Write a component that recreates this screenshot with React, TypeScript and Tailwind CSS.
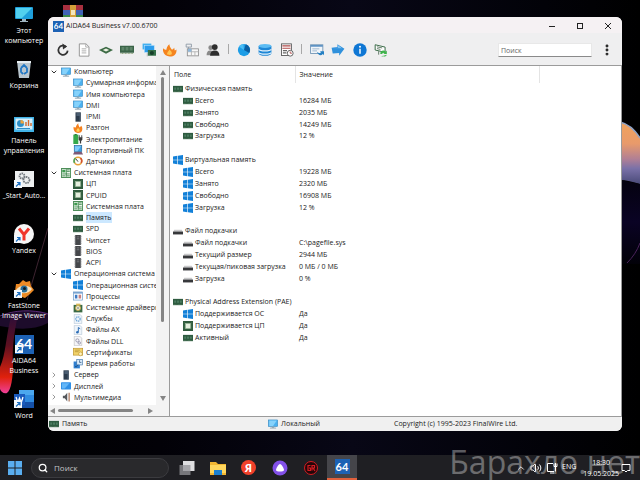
// src/App.tsx
import React, { useState } from 'react';
import { ChevronDown, ChevronRight, ChevronUp, MoreVertical, Search, Volume2 } from 'lucide-react';

interface TreeItem {
  label: string;
  icon: string;
  open?: boolean;
  closed?: boolean;
}

interface Row {
  label: string;
  icon: string;
  value?: string;
}

// Dibujos de 16x16 compartidos por el árbol, la tabla y la barra de estado
const glyphs: Record<string, React.ReactNode> = {
  monitor: (
    <>
      <rect x="0.5" y="1.5" width="15" height="10.500" fill="#4bb1f0" stroke="#2f7fb5" strokeWidth="0.8" />
      <path d="M2 2.500h12L8 11H2z" fill="#86d2fb" />
      <path d="M6 12h4v2H6z" fill="#8aa4b5" />
      <path d="M3 14h10v1H3z" fill="#6e8797" />
    </>
  ),
  server: (
    <>
      <rect x="4" y="0.5" width="8.5" height="15" fill="#2c3b4c" />
      <path d="M5.500 3h5.500M5.500 5h5.500" stroke="#7b93ab" />
      <path d="M11 1v14" stroke="#53657a" />
    </>
  ),
  flame: (
    <>
      <path d="M1 6c1.500 1.500 2.500 1.500 3.500 0.700C5 5 6 2.500 8.500 0.500c-.2 3 1 4 1.800 6.500C11.500 6.500 12.500 6 13 4.500c2 2 2.500 5 1.500 7.500-1 3-3.500 4-6.500 4-4.500 0-8-4.500-7-10z" fill="#f58220" />
      <path d="M8 8c2 2 3 3 2.500 5-.4 1.500-4.600 1.500-5 0C5 11 7 10 8 8z" fill="#ffd35a" />
    </>
  ),
  power: (
    <>
      <rect x="0.5" y="1" width="8" height="15" fill="#35a84a" />
      <rect x="2.500" y="0" width="3.500" height="2" fill="#2b7d39" />
      <path d="M10 2v4M14 2v4" stroke="#333" strokeWidth="1.400" />
      <path d="M9 5h6v4l-2 2v4h-2v-4L9 9z" fill="#3b3b3b" />
    </>
  ),
  laptop: (
    <>
      <rect x="2" y="1" width="12" height="9.500" fill="#3aa0e8" stroke="#22608f" />
      <path d="M3 2h10L7 10H3z" fill="#7fcbfa" />
      <path d="M2 11h12l2 4H0z" fill="#7c5a78" />
    </>
  ),
  gauge: (
    <>
      <circle cx="8" cy="8" r="6" fill="#fff" stroke="#e7a23a" strokeWidth="2.500" />
      <path d="M2.500 11A6 6 0 0 1 4 3.500" fill="none" stroke="#4aa65a" strokeWidth="2.500" />
      <path d="M12 3.500A6 6 0 0 1 13 11" fill="none" stroke="#d2502f" strokeWidth="2.500" />
      <path d="M8 9L5 5" stroke="#333" strokeWidth="1.500" />
    </>
  ),
  board: (
    <>
      <rect x="0.500" y="1" width="15" height="14" fill="#e9f5ea" stroke="#2f7a3d" strokeWidth="1.500" />
      <rect x="2" y="3" width="5" height="4" fill="#3e9a4f" />
      <path d="M9 3h5M9 5.500h5M2 9.500h12M2 12.500h5M9 12.500h5M8.500 2v12" stroke="#2f7a3d" strokeWidth="1.200" />
    </>
  ),
  cpu: (
    <>
      <rect x="0" y="0" width="16" height="16" fill="#2f5a3c" />
      <rect x="4" y="4" width="8" height="8" fill="#e6efdf" stroke="#9dbb9a" />
      <path d="M2 2v12M14 2v12" stroke="#5f8b69" strokeDasharray="1 1" />
    </>
  ),
  ram: (
    <>
      <rect x="0" y="3" width="16" height="10" fill="#2e5b40" />
      <path d="M2 5.500h3v3.500H2zM6.500 5.500h3v3.500h-3zM11 5.500h3v3.500h-3z" fill="#4c7d60" />
      <path d="M0 12.500h16" stroke="#8fae8f" strokeDasharray="1 1" />
    </>
  ),
  chip: (
    <>
      <rect x="3.500" y="0" width="9" height="16" fill="#45474b" />
      <path d="M2 2h2.500M2 5h2.500M2 8h2.500M2 11h2.500M2 14h2.500M11.500 2H14M11.500 5H14M11.500 8H14M11.500 11H14M11.500 14H14" stroke="#77797d" />
      <path d="M6 3h4M6 6h4" stroke="#909296" />
    </>
  ),
  windows: <path d="M0 2.300l7-1v6.200H0zM8 1.200L16 0v7.500H8zM0 8.500h7v6.200l-7-1zM8 8.500h8V16l-8-1.200z" fill="#1280d8" />,
  process: (
    <>
      <rect x="1" y="1.500" width="14" height="13" fill="#fff" stroke="#5b8fc4" />
      <path d="M1 3h14" stroke="#5b8fc4" strokeWidth="2" />
      <rect x="3" y="6" width="4" height="6" fill="#3e7bc4" />
      <rect x="9" y="6" width="4" height="6" fill="#c98080" />
    </>
  ),
  driver: (
    <>
      <rect x="1" y="3" width="14" height="12" fill="#3b6a45" />
      <circle cx="8" cy="8" r="4" fill="#e9edda" stroke="#c9a94b" strokeWidth="1.500" />
      <circle cx="8" cy="8" r="1.200" fill="#555" />
      <path d="M5 1h7v3H5z" fill="#d9b95a" />
    </>
  ),
  gear: (
    <>
      <path d="M2 0.500h9l3 3v12H2z" fill="#eef4fa" stroke="#b6c6d6" />
      <circle cx="8" cy="8" r="3.500" fill="none" stroke="#6aa4d8" strokeWidth="2" strokeDasharray="2 1" />
    </>
  ),
  music: (
    <>
      <path d="M2 0.500h9l3 3v12H2z" fill="#eef4fa" stroke="#b6c6d6" />
      <path d="M8.500 4v7M8.500 4l3 2" stroke="#2b6cb5" strokeWidth="1.600" />
      <circle cx="7" cy="11.500" r="2" fill="#2b6cb5" />
    </>
  ),
  dll: (
    <>
      <path d="M2 0.500h9l3 3v12H2z" fill="#f5f5f8" stroke="#bbb" />
      <circle cx="7" cy="7" r="2.500" fill="none" stroke="#9a9ab0" strokeWidth="1.500" />
      <circle cx="10" cy="11" r="2" fill="none" stroke="#9a9ab0" strokeWidth="1.500" />
    </>
  ),
  cert: (
    <>
      <rect x="0.500" y="2" width="15" height="11" fill="#f2d36a" stroke="#b98f27" />
      <path d="M3 5h8M3 7.500h6" stroke="#a5802a" />
      <circle cx="12" cy="11" r="3" fill="#fff2bd" stroke="#b98f27" />
    </>
  ),
  uptime: (
    <>
      <rect x="1" y="4" width="10" height="11" fill="#2f7fd0" />
      <rect x="6" y="0.500" width="9" height="9" fill="#d8eafa" stroke="#3a6ea5" />
      <path d="M10.500 2v3.500h3M3 11l2 2 3-4" fill="none" stroke="#173f6b" />
    </>
  ),
  display: (
    <>
      <rect x="0" y="2" width="16" height="11.500" rx="1" fill="#2f8fe6" />
      <path d="M1.500 3.500h12L6 12H1.500z" fill="#62b6f8" />
    </>
  ),
  sound: (
    <>
      <path d="M3 6h3l4-5v14l-4-5H3z" fill="#55585c" />
      <path d="M12 1h2v14h-2z" fill="#a9765c" />
    </>
  ),
  disk: (
    <>
      <path d="M2 6h12l2 4H0z" fill="#c9c9cb" />
      <rect x="0" y="9" width="16" height="4.500" fill="#37383b" />
    </>
  ),
};

function Glyph({ name, className }: { name: string; className: string }) {
  return (
    <svg viewBox="0 0 16 16" className={className} aria-hidden="true">
      {glyphs[name]}
    </svg>
  );
}

const treeItems: TreeItem[] = [
  { label: 'Компьютер', icon: 'monitor', open: true },
  { label: 'Суммарная информация', icon: 'monitor' },
  { label: 'Имя компьютера', icon: 'monitor' },
  { label: 'DMI', icon: 'monitor' },
  { label: 'IPMI', icon: 'server' },
  { label: 'Разгон', icon: 'flame' },
  { label: 'Электропитание', icon: 'power' },
  { label: 'Портативный ПК', icon: 'laptop' },
  { label: 'Датчики', icon: 'gauge' },
  { label: 'Системная плата', icon: 'board', open: true },
  { label: 'ЦП', icon: 'cpu' },
  { label: 'CPUID', icon: 'cpu' },
  { label: 'Системная плата', icon: 'board' },
  { label: 'Память', icon: 'ram' },
  { label: 'SPD', icon: 'ram' },
  { label: 'Чипсет', icon: 'chip' },
  { label: 'BIOS', icon: 'chip' },
  { label: 'ACPI', icon: 'chip' },
  { label: 'Операционная система', icon: 'windows', open: true },
  { label: 'Операционная система', icon: 'windows' },
  { label: 'Процессы', icon: 'process' },
  { label: 'Системные драйверы', icon: 'driver' },
  { label: 'Службы', icon: 'gear' },
  { label: 'Файлы AX', icon: 'music' },
  { label: 'Файлы DLL', icon: 'dll' },
  { label: 'Сертификаты', icon: 'cert' },
  { label: 'Время работы', icon: 'uptime' },
  { label: 'Сервер', icon: 'server', closed: true },
  { label: 'Дисплей', icon: 'display', closed: true },
  { label: 'Мультимедиа', icon: 'sound', closed: true },
];

const groups: { title: string; icon: string; rows: Row[] }[] = [
  {
    title: 'Физическая память',
    icon: 'ram',
    rows: [
      { label: 'Всего', icon: 'ram', value: '16284 МБ' },
      { label: 'Занято', icon: 'ram', value: '2035 МБ' },
      { label: 'Свободно', icon: 'ram', value: '14249 МБ' },
      { label: 'Загрузка', icon: 'ram', value: '12 %' },
    ],
  },
  {
    title: 'Виртуальная память',
    icon: 'windows',
    rows: [
      { label: 'Всего', icon: 'windows', value: '19228 МБ' },
      { label: 'Занято', icon: 'windows', value: '2320 МБ' },
      { label: 'Свободно', icon: 'windows', value: '16908 МБ' },
      { label: 'Загрузка', icon: 'windows', value: '12 %' },
    ],
  },
  {
    title: 'Файл подкачки',
    icon: 'disk',
    rows: [
      { label: 'Файл подкачки', icon: 'disk', value: 'C:\\pagefile.sys' },
      { label: 'Текущий размер', icon: 'disk', value: '2944 МБ' },
      { label: 'Текущая/пиковая загрузка', icon: 'disk', value: '0 МБ / 0 МБ' },
      { label: 'Загрузка', icon: 'disk', value: '0 %' },
    ],
  },
  {
    title: 'Physical Address Extension (PAE)',
    icon: 'ram',
    rows: [
      { label: 'Поддерживается ОС', icon: 'windows', value: 'Да' },
      { label: 'Поддерживается ЦП', icon: 'cpu', value: 'Да' },
      { label: 'Активный', icon: 'ram', value: 'Да' },
    ],
  },
];

// Iconos de la barra de herramientas, 24x24
const tools: { name: string; art: React.ReactNode }[][] = [
  [
    {
      name: 'Обновить',
      art: (
        <>
          <path d="M17.500 6.500A8 8 0 1 0 20 13" fill="none" stroke="#333" strokeWidth="3" />
          <path d="M11 1l8 5-7 5z" fill="#333" />
        </>
      ),
    },
    {
      name: 'Отчёт',
      art: (
        <>
          <path d="M4 1.500h11.500l5 5v16H4z" fill="#fff" stroke="#8c8c8c" strokeWidth="1.500" />
          <path d="M15 2v5h5M8 10h8M8 13.500h8M8 17h8" fill="none" stroke="#a5a5a5" strokeWidth="1.500" />
        </>
      ),
    },
    {
      name: 'ЦП',
      art: (
        <>
          <path d="M0 12l12-5.500L24 12l-12 6.500z" fill="#3d6b45" />
          <path d="M6.500 12l5.500-2.500 5.500 2.500-5.500 2.500z" fill="#eef2e4" />
        </>
      ),
    },
    {
      name: 'Память',
      art: (
        <>
          <path d="M0 4.500h24v12H0z" fill="#3a6347" />
          <path d="M2.500 7h5v6h-5zM9.500 7h5v6h-5zM16.500 7h5v6h-5z" fill="#5d8468" />
          <path d="M1 18h22" stroke="#8aa07a" strokeWidth="2" strokeDasharray="1.500 1" />
        </>
      ),
    },
    {
      name: 'Видео',
      art: (
        <>
          <rect x="1" y="1" width="15" height="10" fill="#42b0f0" />
          <rect x="4" y="4" width="17" height="12" fill="#2b9cec" stroke="#b9e1fb" />
          <path d="M10 12h14v10H10z" fill="#34704a" />
          <circle cx="17" cy="17" r="3.500" fill="#16402a" />
          <path d="M9 17v6" stroke="#999" />
        </>
      ),
    },
    {
      name: 'Разгон',
      art: (
        <>
          <path d="M0 9c2 2 4 3 6 2C6 8 8 4 11 2c0 4 2 6 4 9 2 0 3-1 4-3 1 2 1 3 .5 4.500 1.500 0 2.500-.5 3.500-1.500.5 4-.5 7-3 9.500-2 2-5 2.500-8 2.500C5 23-1 18 0 9z" fill="#f5841f" />
          <path d="M11 11c3 3 5 5 4 8-1 2-7 2-8 0-.5-3 3-5 4-8z" fill="#ffc653" />
        </>
      ),
    },
    {
      name: 'Сеть',
      art: (
        <>
          <path d="M2 2h9v5H2zM6 7v4" fill="none" stroke="#8b97a3" strokeWidth="1.500" />
          <rect x="4" y="10" width="19" height="12" fill="#f8f8f8" stroke="#909090" strokeWidth="1.500" />
          <path d="M4 15h19M11 10v12M17 15v7" stroke="#b0b0b0" strokeWidth="1.500" />
          <path d="M5 10h6v5H5z" fill="#8eb6d9" />
        </>
      ),
    },
    {
      name: 'Пользователи',
      art: (
        <>
          <circle cx="8" cy="8" r="4" fill="#8a8a8a" />
          <path d="M1 21c0-5 2-8 6-8s6 3 6 8z" fill="#8a8a8a" />
          <circle cx="15" cy="7" r="5" fill="#2e2e2e" />
          <path d="M7 22c0-6 3-9 8-9s8 3 8 9z" fill="#2e2e2e" />
        </>
      ),
    },
  ],
  [
    {
      name: 'Диск',
      art: (
        <>
          <circle cx="12" cy="12" r="10.500" fill="#1d9de6" />
          <path d="M12 12L15 2a10.500 10.500 0 0 1 6 15z" fill="#0a5fa3" />
          <path d="M12 12L3 6a10.500 10.500 0 0 1 8-4.500z" fill="#4bbdf5" />
        </>
      ),
    },
    {
      name: 'База данных',
      art: (
        <>
          <path d="M1 5v13c0 2 4 4 11 4s11-2 11-4V5z" fill="#1e87d6" />
          <ellipse cx="12" cy="5" rx="11" ry="3.500" fill="#5cbcf3" />
          <path d="M1 11c3 3.500 19 3.500 22 0M1 16.500c3 3.500 19 3.500 22 0" fill="none" stroke="#e6f3fc" strokeWidth="2" />
        </>
      ),
    },
    {
      name: 'Журнал',
      art: (
        <>
          <rect x="2.500" y="1.500" width="17" height="20" fill="#fff" stroke="#555" strokeWidth="1.500" />
          <path d="M4 5h14M4 9h14" stroke="#b04a4a" strokeWidth="2" />
          <path d="M5 13h7M5 17h6" stroke="#666" strokeWidth="2" />
          <circle cx="17.500" cy="17.500" r="5" fill="#fff" stroke="#555" strokeWidth="1.500" />
          <path d="M17.500 14.500v3h3" fill="none" stroke="#b04a4a" strokeWidth="1.500" />
        </>
      ),
    },
  ],
  [
    {
      name: 'Мастер отчётов',
      art: (
        <>
          <rect x="1" y="3" width="21" height="15" fill="#f0f5fa" stroke="#7195b5" strokeWidth="1.500" />
          <path d="M1 5h21" stroke="#5f93c4" strokeWidth="3" />
          <path d="M4 10h12M4 13.500h8" stroke="#98b2c9" strokeWidth="1.500" />
          <path d="M12 15c3 3 5 3 7 1l-2-2h7v7l-2-2c-4 4-8 2-10-4z" fill="#2580c3" />
        </>
      ),
    },
    {
      name: 'Обновление',
      art: (
        <>
          <path d="M1 8l10-1V2l12 8-9 12v-5L3 18z" fill="#3091dc" />
          <path d="M2 8.500l10-.500V4l7 5z" fill="#83c4f2" />
        </>
      ),
    },
    {
      name: 'Информация',
      art: (
        <>
          <circle cx="12" cy="12" r="11.500" fill="#0f77d4" />
          <circle cx="12" cy="6.500" r="1.700" fill="#fff" />
          <path d="M12 10v8.500" stroke="#fff" strokeWidth="2.500" />
        </>
      ),
    },
    {
      name: 'Проверка',
      art: (
        <>
          <path d="M2 3l17 4v9L2 12z" fill="#fff" stroke="#3b6b48" strokeWidth="1.700" />
          <path d="M5 6.500l9 2M5 9.500l6 1.500M8 14v6" stroke="#55705c" strokeWidth="1.500" />
          <path d="M11 19a5 5 0 0 1 9-4l2-2v6h-6l2-2a3 3 0 0 0-4 2zM22 20a5 5 0 0 1-8 2l-2 1" fill="#3db54a" />
        </>
      ),
    },
  ],
];

function ShortcutArrow() {
  return (
    <>
      <rect x="0" y="11" width="8" height="8" fill="#f4f8fc" />
      <path d="M2 17.500l3.500-3.500M3 13.500h3v3" fill="none" stroke="#1d6fc0" strokeWidth="1.200" />
    </>
  );
}

function Badge64() {
  return (
    <span className="flex h-[19px] w-[19px] items-center justify-center bg-[#1d62b4] font-['Lato'] text-[14px] font-bold leading-none text-white">
      64
    </span>
  );
}

// Accesos directos del escritorio, lienzo de 20x20
const shortcuts: { label: string[]; art: React.ReactNode }[] = [
  {
    label: ['Этот', 'компьютер'],
    art: (
      <>
        <rect x="1" y="3" width="18" height="12" rx="1" fill="#1f9fdb" />
        <path d="M2 4h16L8 14H2z" fill="#53d0ee" />
        <path d="M8 15h4v2H8zM6 17h8v1H6z" fill="#9fb4c0" />
      </>
    ),
  },
  {
    label: ['Корзина'],
    art: (
      <>
        <path d="M3 2h14l-2 17H5z" fill="#b9c6cf" />
        <path d="M3 2h14v2H3z" fill="#e6edf1" />
        <path d="M7 9l3-3 3 3M13 9v4l-3 2M7 9v4l2 2" fill="none" stroke="#2378c4" strokeWidth="1.800" />
      </>
    ),
  },
  {
    label: ['Панель', 'управления'],
    art: (
      <>
        <rect x="0" y="3" width="20" height="15" fill="#41b3e8" />
        <rect x="1.500" y="4.500" width="17" height="11" fill="#d6effb" />
        <circle cx="6.500" cy="9.500" r="3.500" fill="#2c8fc9" />
        <path d="M6.500 9.500V6a3.500 3.500 0 0 1 3.500 3.500z" fill="#f0a43b" />
        <path d="M12 12V8M14.500 12V6M17 12V9" stroke="#d46a2d" strokeWidth="1.400" />
        <path d="M3 14.500h13" stroke="#2c8fc9" />
      </>
    ),
  },
  {
    label: ['_Start_Auto...'],
    art: (
      <>
        <rect x="1" y="2" width="19" height="16" fill="#eceeef" />
        <circle cx="8" cy="7" r="2.500" fill="none" stroke="#70777d" strokeWidth="1.800" strokeDasharray="1.500 .7" />
        <circle cx="12.500" cy="11" r="3" fill="none" stroke="#70777d" strokeWidth="1.800" strokeDasharray="1.500 .7" />
        <ShortcutArrow />
      </>
    ),
  },
  {
    label: ['Yandex'],
    art: (
      <>
        <circle cx="10" cy="10" r="10" fill="#f6f6f6" />
        <path d="M5 4.500l5 6v6M15 4.500l-5 6" fill="none" stroke="#f0352b" strokeWidth="3" />
        <ShortcutArrow />
      </>
    ),
  },
  {
    label: ['FastStone', 'Image Viewer'],
    art: (
      <>
        <path d="M2 5l3 0 4-4 3 2 4-1 1 5 3 4-4 4-5 4-6-2-4-5z" fill="#ec8a24" />
        <path d="M2 11c3-5 12-6 16-1-3 5-12 6-16 1z" fill="#f4e5c6" />
        <circle cx="10" cy="10" r="3.500" fill="#286c96" />
        <circle cx="10.500" cy="9.500" r="1.500" fill="#0c1b26" />
        <ShortcutArrow />
      </>
    ),
  },
  { label: ['AIDA64', 'Business'], art: null },
  {
    label: ['Word'],
    art: (
      <>
        <rect x="5" y="1" width="15" height="18" rx="1" fill="#2f8be0" />
        <path d="M5 1h15v5H5z" fill="#4ba7ee" />
        <path d="M5 13h15v6H5z" fill="#1450a8" />
        <rect x="0" y="5" width="11" height="11" fill="#1a5bbd" />
        <path d="M2 8l1.800 5.500L5.500 9l1.800 4.500L9 8" fill="none" stroke="#fff" strokeWidth="1.300" />
        <ShortcutArrow />
      </>
    ),
  },
];

function Wallpaper() {
  return (
    <svg viewBox="0 0 640 480" preserveAspectRatio="none" className="absolute inset-0 h-full w-full" aria-hidden="true">
      <defs>
        <linearGradient id="base" x1="0" x2="1">
          <stop offset="0" stopColor="#000" />
          <stop offset="0.250" stopColor="#020107" />
          <stop offset="0.550" stopColor="#080716" />
          <stop offset="0.850" stopColor="#020208" />
          <stop offset="1" stopColor="#000" />
        </linearGradient>
        <linearGradient id="planet" x1="0" y1="0" x2="0" y2="1">
          <stop offset="0" stopColor="#f0a35c" />
          <stop offset="0.350" stopColor="#e89a6b" />
          <stop offset="0.600" stopColor="#b07f95" />
          <stop offset="0.750" stopColor="#7a71a8" />
          <stop offset="1" stopColor="#494a78" />
        </linearGradient>
        <linearGradient id="ribbon" x1="0" y1="0" x2="0" y2="1">
          <stop offset="0" stopColor="#2a0d3a" />
          <stop offset="0.400" stopColor="#5c1020" />
          <stop offset="0.800" stopColor="#e0210c" />
          <stop offset="1" stopColor="#f0409a" />
        </linearGradient>
        <linearGradient id="night" x1="0" y1="0" x2="0" y2="1">
          <stop offset="0" stopColor="#04020f" />
          <stop offset="0.500" stopColor="#0a0324" />
          <stop offset="1" stopColor="#020108" />
        </linearGradient>
      </defs>
      <rect width="640" height="480" fill="url(#base)" />
      <path d="M48 228L27 300" stroke="#3d2431" fill="none" />
      <path d="M0 318c14-8 32-9 48-5v10c-16 8-32 6-48 3z" fill="#1d0c2b" />
      <path d="M0 316c14-6 32-7 48-2" stroke="#5a2a78" fill="none" />
      <path d="M18 314c-4 20-6 34-5 50 0 14-2 26-6 29-3 1-6-1-7-4v-22c6-12 6-34 12-54z" fill="url(#ribbon)" />
      <path d="M620 122c8 2 15 8 20 16v46c-7-2-14-4-20-4z" fill="url(#planet)" />
      <path d="M620 122c8 2 15 8 20 16" stroke="#8fa3c6" strokeWidth="1.500" fill="none" />
      <path d="M620 180l20 4v80H620z" fill="url(#night)" />
      <path d="M640 243c-3 8-7 14-13 20" stroke="#4b235c" fill="none" />
    </svg>
  );
}

function Desktop() {
  return (
    <div className="relative flex">
      <ul className="w-12">
        {shortcuts.map(item => (
          <li key={item.label[0]} className="flex h-[55px] flex-col items-center pt-1">
            {item.art ? (
              <svg viewBox="0 0 20 20" className="h-5 w-5 shrink-0" aria-hidden="true">
                {item.art}
              </svg>
            ) : (
              <span className="relative flex h-5 items-center">
                <Badge64 />
                <svg viewBox="0 0 20 20" className="absolute inset-0 h-5 w-5" aria-hidden="true">
                  <ShortcutArrow />
                </svg>
              </span>
            )}
            <span className="mt-0.5 flex flex-col items-center whitespace-nowrap text-[7px] leading-[10px] text-white">
              {item.label.map(line => (
                <span key={line}>{line}</span>
              ))}
            </span>
          </li>
        ))}
      </ul>
      {/* Archivo comprimido */}
      <svg viewBox="0 0 20 20" className="ml-[15px] mt-1 h-5 w-5" aria-hidden="true">
        <path d="M0 1h20v5H0z" fill="#a8303f" />
        <path d="M0 6h20v5H0z" fill="#3f62b5" />
        <path d="M0 11h20v8H0z" fill="#3b8a4a" />
        <path d="M7 1h6v18H7z" fill="#d3a03a" />
        <path d="M8 6h4v5H8z" fill="#f3e6bb" />
      </svg>
    </div>
  );
}

function TitleBar() {
  return (
    <header className="flex h-4 shrink-0 items-center bg-[#f5f1f3] pl-[5px]">
      <span className="mt-0.5 flex h-[11px] w-[11px] items-center justify-center bg-[#1d62b4] font-['Lato'] text-[8px] font-bold leading-none text-white">
        64
      </span>
      <h1 className="ml-0.5 mt-[3px] flex-1 text-[7px]">AIDA64 Business v7.00.6700</h1>
      <button type="button" aria-label="Свернуть" className="flex w-7 justify-center pt-0.5">
        <svg viewBox="0 0 8 8" className="h-2 w-2" stroke="#222" fill="none">
          <path d="M1 4.500h6" />
        </svg>
      </button>
      <button type="button" aria-label="Развернуть" className="flex w-7 justify-center pt-0.5">
        <svg viewBox="0 0 8 8" className="h-2 w-2" stroke="#222" fill="none">
          <rect x="1.500" y="1.500" width="5" height="5" />
        </svg>
      </button>
      <button type="button" aria-label="Закрыть" className="flex w-7 justify-center pt-0.5">
        <svg viewBox="0 0 8 8" className="h-2 w-2" stroke="#222" fill="none">
          <path d="M1 1l6 6M7 1L1 7" />
        </svg>
      </button>
    </header>
  );
}

function Toolbar() {
  const [query, setQuery] = useState('');

  return (
    <div className="flex h-[33px] shrink-0 items-center border-b border-[#9b9b9b] bg-[#efeff0] pl-1">
      {tools.map((group, i) => (
        <React.Fragment key={i}>
          {i > 0 && <span className="mx-1 h-2.5 w-px bg-[#a8a8a8]" />}
          {group.map((tool, j) => (
            <button
              key={tool.name}
              type="button"
              aria-label={tool.name}
              className={`flex items-center justify-center pb-0.5 pt-1 ${j % 2 ? 'w-[22px]' : 'w-[21px]'}`}
            >
              <svg viewBox="0 0 24 24" className="h-3.5 w-3.5">
                {tool.art}
              </svg>
            </button>
          ))}
        </React.Fragment>
      ))}
      <input
        type="text"
        aria-label="Поиск"
        value={query}
        onChange={e => setQuery(e.target.value)}
        placeholder="Поиск"
        className="ml-auto mt-0.5 h-[14px] w-[94px] border border-[#e8e8e8] border-b-[#8a8a8a] bg-white px-0.5 text-[7px] placeholder-[#666] focus:outline-none"
      />
      <button type="button" aria-label="Меню" className="ml-2 mr-2 mt-0.5 flex w-3.5 justify-center">
        <MoreVertical className="h-3.5 w-3.5 text-[#222]" strokeWidth={3} />
      </button>
    </div>
  );
}

function Tree() {
  const [selected, setSelected] = useState(13);

  return (
    <nav className="flex w-[121px] shrink-0 flex-col bg-white">
      <div className="flex min-h-0 flex-1">
        <ul className="grid h-[337px] min-w-0 flex-1 auto-rows-fr overflow-hidden">
          {treeItems.map((item, i) => {
            const root = item.open || item.closed;
            return (
              <li key={i} className="flex min-h-0 min-w-0 items-center">
                <button
                  type="button"
                  onClick={() => setSelected(i)}
                  className={`flex h-[11px] items-center whitespace-nowrap text-[7px] leading-[11px] ${root ? 'pl-0.5' : 'pl-[25px]'}`}
                >
                  {item.open && <ChevronDown className="mr-[3px] h-2 w-2 shrink-0 text-[#333]" strokeWidth={3} />}
                  {item.closed && <ChevronRight className="mr-[3px] h-2 w-2 shrink-0 text-[#999]" strokeWidth={3} />}
                  <Glyph name={item.icon} className="h-2.5 w-2.5 shrink-0" />
                  <span className={`ml-[3px] pr-px ${selected === i ? 'bg-[#cce8ff]' : ''}`}>{item.label}</span>
                </button>
              </li>
            );
          })}
        </ul>
        {/* Barra vertical */}
        <div className="flex w-[13px] shrink-0 flex-col items-center bg-[#f3f3f3] py-1">
          <svg viewBox="0 0 6 5" className="h-[5px] w-1.5" aria-hidden="true">
            <path d="M3 0l3 5H0z" fill="#858585" />
          </svg>
          <div className="mt-0.5 h-[245px] w-[3px] rounded-full bg-[#858585]" />
          <svg viewBox="0 0 6 5" className="mt-auto h-[5px] w-1.5" aria-hidden="true">
            <path d="M3 5l3-5H0z" fill="#858585" />
          </svg>
        </div>
      </div>
      {/* Barra horizontal */}
      <div className="flex h-[11px] shrink-0 items-center bg-[#f3f3f3] pl-0.5 pr-4">
        <svg viewBox="0 0 5 6" className="h-1.5 w-[5px]" aria-hidden="true">
          <path d="M0 3l5-3v6z" fill="#858585" />
        </svg>
        <div className="ml-[3px] h-[3px] w-[75px] rounded-full bg-[#858585]" />
        <svg viewBox="0 0 5 6" className="ml-auto h-1.5 w-[5px]" aria-hidden="true">
          <path d="M5 3L0 0v6z" fill="#858585" />
        </svg>
      </div>
    </nav>
  );
}

function Details() {
  return (
    <main className="min-w-0 flex-1 border-l border-r border-[#9b9b9b] bg-white">
      <table className="h-[278px] w-full table-fixed border-collapse text-left text-[7px] leading-[10px]">
        <thead>
          <tr className="h-[17px]">
            <th className="w-[125px] border-r border-[#e4e4e4] pl-1 font-normal">Поле</th>
            <th className="border-r border-[#e4e4e4] pl-1 font-normal">Значение</th>
            <th className="w-[82px]" />
          </tr>
        </thead>
        <tbody>
          {groups.map((group, i) => (
            <React.Fragment key={group.title}>
              {i > 0 && (
                <tr>
                  <td colSpan={3} className="p-0">
                    &nbsp;
                  </td>
                </tr>
              )}
              <tr>
                <th colSpan={3} className="p-0 pl-[3px] font-normal">
                  <span className="flex items-center gap-0.5">
                    <Glyph name={group.icon} className="h-2.5 w-2.5" />
                    {group.title}
                  </span>
                </th>
              </tr>
              {group.rows.map(row => (
                <tr key={row.label}>
                  <td className="p-0 pl-[13px]">
                    <span className="flex items-center gap-0.5 whitespace-nowrap">
                      <Glyph name={row.icon} className="h-2.5 w-2.5" />
                      {row.label}
                    </span>
                  </td>
                  <td className="p-0 pl-1">{row.value}</td>
                  <td className="p-0" />
                </tr>
              ))}
            </React.Fragment>
          ))}
        </tbody>
      </table>
    </main>
  );
}

function StatusBar() {
  return (
    <footer className="flex h-[15px] shrink-0 items-center border-t border-[#9b9b9b] bg-[#f0f0f0] text-[7px]">
      <span className="flex w-[220px] items-center gap-[3px] pl-px">
        <Glyph name="ram" className="h-2.5 w-2.5" />
        Память
      </span>
      <span className="flex w-[126px] items-center gap-[3px]">
        <Glyph name="monitor" className="h-2.5 w-2.5" />
        Локальный
      </span>
      <span>Copyright (c) 1995-2023 FinalWire Ltd.</span>
    </footer>
  );
}

function Taskbar() {
  const [query, setQuery] = useState('');

  return (
    <div className="absolute inset-x-0 bottom-0 flex h-[25px] items-center bg-[#1f1f23] pl-2 text-white">
      <button type="button" aria-label="Пуск">
        <svg viewBox="0 0 14 14" className="h-3.5 w-3.5">
          <path d="M0 0h6.500v6.500H0zM7.500 0H14v6.500H7.500zM0 7.500h6.500V14H0zM7.500 7.500H14V14H7.500z" fill="#5aaef0" />
        </svg>
      </button>
      <label className="ml-[9px] mr-0.5 flex h-5 w-[138px] items-center gap-1.5 rounded-full border border-[#3b3b3f] bg-[#29292c] pl-1.5">
        <Search className="h-2.5 w-2.5 shrink-0" strokeWidth={3} />
        <input
          type="text"
          aria-label="Поиск"
          value={query}
          onChange={e => setQuery(e.target.value)}
          placeholder="Поиск"
          className="w-full bg-transparent text-[8px] placeholder-[#c4c4c4] focus:outline-none"
        />
      </label>
      {/* Aplicaciones */}
      <button type="button" aria-label="Представление задач" className="flex w-[31px] justify-center">
        <svg viewBox="0 0 16 16" className="h-4 w-4">
          <rect x="0.500" y="5" width="11" height="10" fill="#77777b" />
          <rect x="4" y="1" width="11.500" height="10" fill="#dedee0" />
          <path d="M4 5h7.500v6H4z" fill="#a6a6aa" />
        </svg>
      </button>
      <button type="button" aria-label="Проводник" className="flex w-[31px] justify-center">
        <svg viewBox="0 0 16 16" className="h-4 w-4">
          <path d="M0 2h6l2 2h8v11H0z" fill="#f2b632" />
          <path d="M0 5h16v8H0z" fill="#ffd75e" />
          <path d="M4 10h8v5H4z" fill="#1a7fd0" />
        </svg>
      </button>
      <button
        type="button"
        className="mx-2 flex h-[15px] w-[15px] items-center justify-center rounded-full bg-[#f0402a] text-[11px] font-bold leading-none"
      >
        Я
      </button>
      <button type="button" aria-label="Алиса" className="flex w-[31px] justify-center">
        <svg viewBox="0 0 16 16" className="h-4 w-4">
          <circle cx="8" cy="8" r="7.500" fill="#8250e8" />
          <path d="M8 4c1.500 0 4 4.500 4 6 0 2-8 2-8 0 0-1.500 2.500-6 4-6z" fill="#fff" />
        </svg>
      </button>
      <button type="button" aria-label="Игры" className="flex w-[31px] justify-center">
        <svg viewBox="0 0 16 16" className="h-4 w-4" fill="none" stroke="#d41c22">
          <circle cx="8" cy="8" r="6.500" fill="#240609" />
          <path d="M7.500 5.500H5v5h2.500V8H6M9 10.500v-5h2.500V8H9M10 8l2 3" strokeWidth="1.200" />
        </svg>
      </button>
      <button type="button" className="ml-px flex h-full w-[30px] items-center justify-center border-b-2 border-[#e0603c] bg-[#45454a]">
        <span className="flex h-[15px] w-[15px] items-center justify-center bg-[#1d62b4] font-['Lato'] text-[11px] font-bold leading-none">64</span>
      </button>
      {/* Bandeja del sistema */}
      <div className="ml-auto flex items-center pr-[9px]">
        <ChevronUp className="h-2.5 w-2.5" />
        <Volume2 className="ml-1 h-3 w-3" />
        <svg viewBox="0 0 12 12" className="ml-1 h-3 w-3" fill="none" stroke="#fff" aria-hidden="true">
          <path d="M7 1.500H1.500v8H8M9.500 1v3M11 1.500v3H8v-3M9.500 4.500v5M4 11h4" />
        </svg>
        <span className="ml-1 text-[7px]">ENG</span>
        <span className="ml-[7px] flex flex-col items-center text-[7px] leading-[11px]">
          <span>18:30</span>
          <span>19.05.2025</span>
        </span>
        <svg viewBox="0 0 10 10" className="ml-0.5 h-2.5 w-2.5" fill="none" stroke="#fff" aria-hidden="true">
          <path d="M1 1.500h8v6H6.500L5 9 3.500 7.500H1z" />
        </svg>
      </div>
    </div>
  );
}

export default function App() {
  return (
    <div className="relative h-screen overflow-hidden bg-black font-['Open_Sans','Noto_Sans',sans-serif] text-[#1a1a1a]">
      <Wallpaper />
      <Desktop />
      {/* Ventana principal */}
      <section className="absolute bottom-[49px] left-12 right-[18px] top-[17px] flex flex-col overflow-hidden rounded-md bg-[#f0f0f0]">
        <TitleBar />
        <Toolbar />
        <div className="flex min-h-0 flex-1">
          <Tree />
          <Details />
        </div>
        <StatusBar />
      </section>
      <Taskbar />
      {/* Marca de agua */}
      <p className="pointer-events-none absolute bottom-0 right-0 whitespace-nowrap text-[32px] leading-[36px] text-white/35">
        Барахло.нет
      </p>
    </div>
  );
}
